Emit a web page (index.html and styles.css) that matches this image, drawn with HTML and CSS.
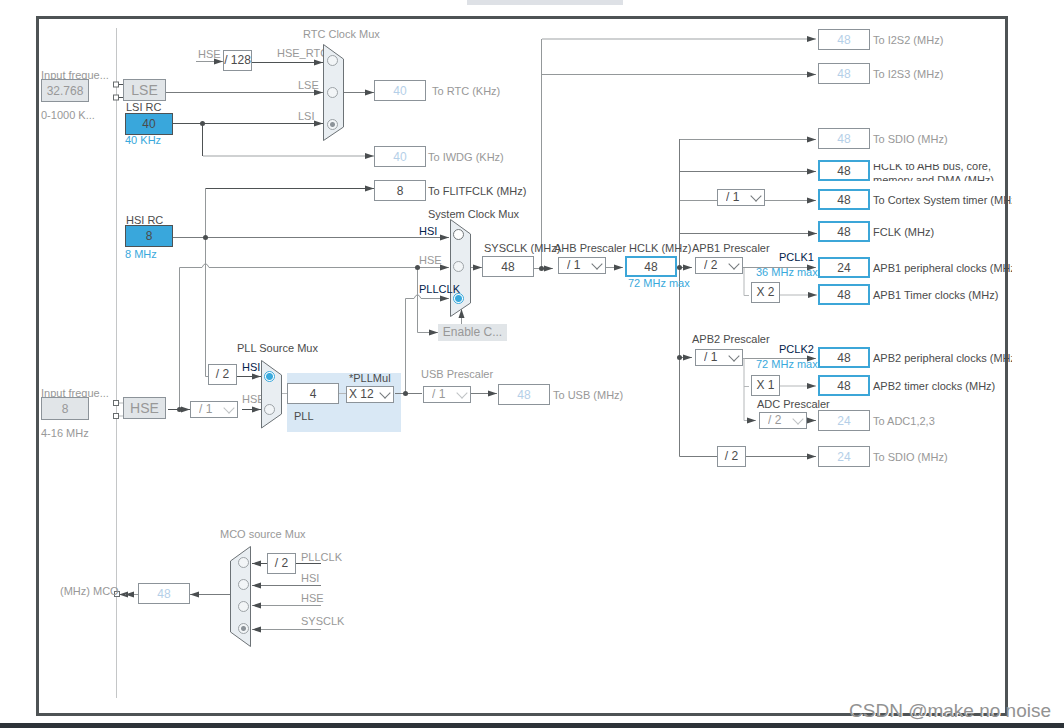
FILE: index.html
```html
<!DOCTYPE html>
<html lang="en">
<head>
<meta charset="utf-8">
<title>Clock Configuration</title>
<link rel="stylesheet" href="styles.css">
</head>
<body>
<div class="page">
  <div class="tab-edge"></div>
  <main class="frame">
    <div class="pll-area"></div>
    <svg class="wires" aria-hidden="true">
      <defs>
        <marker id="arrow" markerUnits="userSpaceOnUse" markerWidth="10" markerHeight="8" refX="9" refY="3.5" orient="auto"><path d="M0 0.5L9 3.5L0 6.5Z" fill="#4a4e50"/></marker>
      </defs>
      <path class="rail" d="M116.500 28V698"/>
      <g class="wire to">
        <path class="mid" d="M196 61.500H223"/>
        <path class="dark" d="M252 62.500H323"/>
        <path d="M166 92.500H323"/>
        <path class="dark" d="M173 123.500H323"/>
        <path d="M343 92.500H374"/>
        <path class="pale" d="M203 156H374"/>
        <path class="dark" d="M205 188.500H374"/>
        <path d="M173 237.500H449"/>
        <path class="mid" d="M179.500 409V267.500H202Q205.500 260 209 267.500H449"/>
        <path class="mid" d="M417.500 267V332.500H438"/>
        <path class="mid" d="M405.500 393V298.500H414Q417.500 291 421 298.500H449"/>
        <path class="mid" d="M470 267.500H482"/>
        <path class="mid" d="M461.500 324V309"/>
        <path class="mid" d="M534 268.500H553"/>
        <path class="pale" d="M542 39H816"/>
        <path class="mid" d="M542 74.500H816"/>
        <path class="mid" d="M606 267.500H623"/>
        <path d="M677 267.500H692"/>
        <path class="mid" d="M680 139.500H816"/>
        <path d="M680 171.500H816"/>
        <path class="mid" d="M765 200.500H816"/>
        <path d="M680 233.500H817"/>
        <path class="mid" d="M743 267.500H816"/>
        <path class="light" d="M780 295H817"/>
        <path d="M680 357.500H692"/>
        <path class="mid" d="M743 358.500H816"/>
        <path class="light" d="M780 386H816"/>
        <path class="light" d="M744 358V420.500H756"/>
        <path d="M807 420.500H816"/>
        <path d="M746 456.500H816"/>
        <path class="dark" d="M168 409.500H190"/>
        <path class="dark" d="M242 409.500H261"/>
        <path class="dark" d="M237 376.500H261"/>
        <path d="M471 393.500H497"/>
        <path class="dark" d="M267 563.500H252"/>
        <path d="M321 585.500H252"/>
        <path class="mid" d="M321 605.500H252"/>
        <path class="mid" d="M321 629.500H252"/>
        <path d="M230 594.500H190"/>
        <path class="mid" d="M138 594.500H119"/>
        <path class="mid" d="M138 594.500H125"/>
      </g>
      <g class="wire">
        <path class="dark" d="M202.500 123V156"/>
        <path class="mid" d="M205.500 188V376.500H208"/>
        <path class="mid" d="M541.500 39V268"/>
        <path d="M679.500 139V456.500H717"/>
        <path class="mid" d="M680 200.500H717"/>
        <path class="light" d="M744 268V295.500H749"/>
        <path class="light" d="M744 386.500H749"/>
        <path class="light" d="M281 393.500H287M339 393.500H346"/>
        <path d="M395 393.500H422"/>
        <path class="dark" d="M296 563.500H321"/>
        <path class="dark" d="M119 84.500H123M119 97.500H123"/>
        <path class="light" d="M119 403H123M119 416H123"/>
      </g>
      <g class="dots">
        <circle cx="202.500" cy="123.500" r="2.500"/><circle cx="205.500" cy="237.500" r="2.500"/>
        <circle cx="417.500" cy="267.500" r="2.500"/><circle cx="541.500" cy="268.500" r="2.500"/>
        <circle cx="679.500" cy="267.500" r="2.500"/><circle cx="679.500" cy="357.500" r="2.500"/>
        <circle cx="179.500" cy="409.500" r="2.500"/><circle cx="405.500" cy="393.500" r="2.500"/>
      </g>
      <g class="pins">
        <rect x="113.500" y="82" width="5" height="5"/><rect x="113.500" y="95" width="5" height="5"/>
        <rect x="113.500" y="400.500" width="5" height="5"/><rect x="113.500" y="413.500" width="5" height="5"/>
        <rect x="114.500" y="591.500" width="5" height="5"/>
      </g>
      <text class="under" x="277" y="57">HSE_RTC</text>
      <text class="under" x="242" y="403">HSE</text>
      <g class="muxes">
        <path d="M323.500 44.500L343.500 59V127L323.500 140.500Z"/>
        <path d="M450.500 219.500L470.500 234V303L450.500 316.500Z"/>
        <path d="M261.500 360.500L281.500 375V414L261.500 428Z"/>
        <path d="M250.500 546.500L230.500 561V632L250.500 646.500Z"/>
      </g>
    </svg>

    <!-- RTC, LSE and LSI -->
    <label class="text gray lse-title" for="lse-in">Input freque...</label>
    <input class="box input-freq lse-in" id="lse-in" value="32.768" disabled>
    <span class="text gray lse-range">0-1000 K...</span>
    <button class="source lse" disabled>LSE</button>
    <label class="text lsi-title" for="lsi">LSI RC</label>
    <input class="box osc lsi" id="lsi" value="40" readonly>
    <span class="text blue lsi-unit">40 KHz</span>
    <span class="text gray rtc-hse">HSE</span>
    <span class="box factor f128">/ 128</span>
    <span class="text gray rtc-title">RTC Clock Mux</span>
    <input class="dial rtc-a" type="radio" name="rtc" aria-label="HSE_RTC" disabled>
    <input class="dial rtc-b" type="radio" name="rtc" id="rtc-b" disabled>
    <input class="dial rtc-c" type="radio" name="rtc" id="rtc-c" disabled checked>
    <label class="text gray rtc-lse" for="rtc-b">LSE</label>
    <label class="text gray rtc-lsi" for="rtc-c">LSI</label>
    <div class="out off rtc-out"><input class="box" id="o-rtc" value="40" disabled><label for="o-rtc">To RTC (KHz)</label></div>
    <div class="out off iwdg"><input class="box" id="o-iwdg" value="40" disabled><label for="o-iwdg">To IWDG (KHz)</label></div>
    <div class="out flitf"><input class="box" id="o-flitf" value="8" readonly><label for="o-flitf">To FLITFCLK (MHz)</label></div>

    <!-- System clock -->
    <label class="text hsi-title" for="hsi">HSI RC</label>
    <input class="box osc hsi" id="hsi" value="8" readonly>
    <span class="text blue hsi-unit">8 MHz</span>
    <span class="text sys-title">System Clock Mux</span>
    <input class="dial on sys-a" type="radio" name="sys" id="sys-a">
    <input class="dial sys-b" type="radio" name="sys" id="sys-b" disabled>
    <input class="dial on sys-c" type="radio" name="sys" id="sys-c" checked>
    <label class="text navy sys-hsi" for="sys-a">HSI</label>
    <label class="text gray sys-hse" for="sys-b">HSE</label>
    <label class="text navy sys-pll" for="sys-c">PLLCLK</label>
    <button class="css-button" disabled>Enable C...</button>
    <label class="text sysclk-title" for="sysclk">SYSCLK (MHz)</label>
    <input class="box sysclk" id="sysclk" value="48" readonly>
    <label class="text ahb-title" for="ahb">AHB Prescaler</label>
    <span class="pick ahb"><select id="ahb"><option>/ 1</option></select></span>
    <label class="text hclk-title" for="hclk">HCLK (MHz)</label>
    <input class="box live hclk" id="hclk" value="48">
    <span class="text blue hclk-max">72 MHz max</span>

    <!-- PLL -->
    <label class="text gray hse-title" for="hse-in">Input freque...</label>
    <input class="box input-freq hse-in" id="hse-in" value="8" disabled>
    <span class="text gray hse-range">4-16 MHz</span>
    <button class="source hse" disabled>HSE</button>
    <span class="pick off hse-div"><select aria-label="HSE divider" disabled><option>/ 1</option></select></span>
    <span class="box factor hsi-half">/ 2</span>
    <span class="text pllsrc-title">PLL Source Mux</span>
    <input class="dial on pll-a" type="radio" name="pll" id="pll-a" checked>
    <input class="dial pll-b" type="radio" name="pll" aria-label="HSE" disabled>
    <label class="text navy pll-hsi" for="pll-a">HSI</label>
    <input class="box pll-in" id="pll-in" value="4" readonly>
    <label class="text pll-title" for="pll-in">PLL</label>
    <label class="text mul-title" for="mul">*PLLMul</label>
    <span class="pick mul"><select id="mul"><option>X 12</option></select></span>
    <label class="text gray usb-title" for="usb">USB Prescaler</label>
    <span class="pick off usb"><select id="usb" disabled><option>/ 1</option></select></span>
    <div class="out off usb-out"><input class="box" id="o-usb" value="48" disabled><label for="o-usb">To USB (MHz)</label></div>

    <!-- Bus prescalers -->
    <span class="pick cortex-div"><select aria-label="Cortex System timer prescaler"><option>/ 1</option></select></span>
    <label class="text apb1-title" for="apb1">APB1 Prescaler</label>
    <span class="pick apb1"><select id="apb1"><option>/ 2</option></select></span>
    <span class="text navy pclk1">PCLK1</span>
    <span class="text blue pclk1-max">36 MHz max</span>
    <span class="box factor apb1-x">X 2</span>
    <label class="text apb2-title" for="apb2">APB2 Prescaler</label>
    <span class="pick apb2"><select id="apb2"><option>/ 1</option></select></span>
    <span class="text navy pclk2">PCLK2</span>
    <span class="text blue pclk2-max">72 MHz max</span>
    <span class="box factor apb2-x">X 1</span>
    <label class="text adc-title" for="adc">ADC Prescaler</label>
    <span class="pick off adc"><select id="adc" disabled><option>/ 2</option></select></span>
    <span class="box factor sdio-half">/ 2</span>

    <!-- Peripheral outputs -->
    <div class="out end off o1"><input class="box" id="o1" value="48" disabled><label for="o1">To I2S2 (MHz)</label></div>
    <div class="out end off o2"><input class="box" id="o2" value="48" disabled><label for="o2">To I2S3 (MHz)</label></div>
    <div class="out end off o3"><input class="box" id="o3" value="48" disabled><label for="o3">To SDIO (MHz)</label></div>
    <div class="out end o4"><input class="box live" id="o4" value="48"><label class="two-line" for="o4"><span>HCLK to AHB bus, core,<br>memory and DMA (MHz)</span></label></div>
    <div class="out end o5"><input class="box live" id="o5" value="48"><label for="o5">To Cortex System timer (MHz)</label></div>
    <div class="out end o6"><input class="box live" id="o6" value="48"><label for="o6">FCLK (MHz)</label></div>
    <div class="out end o7"><input class="box live" id="o7" value="24"><label for="o7">APB1 peripheral clocks (MHz)</label></div>
    <div class="out end o8"><input class="box live" id="o8" value="48"><label for="o8">APB1 Timer clocks (MHz)</label></div>
    <div class="out end o9"><input class="box live" id="o9" value="48"><label for="o9">APB2 peripheral clocks (MHz)</label></div>
    <div class="out end o10"><input class="box live" id="o10" value="48"><label for="o10">APB2 timer clocks (MHz)</label></div>
    <div class="out end off o11"><input class="box" id="o11" value="24" disabled><label for="o11">To ADC1,2,3</label></div>
    <div class="out end off o12"><input class="box" id="o12" value="24" disabled><label for="o12">To SDIO (MHz)</label></div>

    <!-- MCO -->
    <span class="text gray mco-title">MCO source Mux</span>
    <input class="dial mco-a" type="radio" name="mco" id="mco-a" disabled>
    <input class="dial mco-b" type="radio" name="mco" id="mco-b" disabled>
    <input class="dial mco-c" type="radio" name="mco" id="mco-c" disabled>
    <input class="dial mco-d" type="radio" name="mco" id="mco-d" disabled checked>
    <span class="box factor mco-half">/ 2</span>
    <label class="text gray mco-pll" for="mco-a">PLLCLK</label>
    <label class="text gray mco-hsi" for="mco-b">HSI</label>
    <label class="text gray mco-hse" for="mco-c">HSE</label>
    <label class="text gray mco-sys" for="mco-d">SYSCLK</label>
    <label class="text gray mco-unit" for="mco">(MHz) MCO</label>
    <input class="box idle mco" id="mco" value="48" disabled>
  </main>
  <footer class="bottom-bar"></footer>
  <span class="watermark">CSDN @make no noise</span>
</div>
</body>
</html>
```
FILE: styles.css
```css
* { box-sizing: border-box; }
body { margin: 0; background: #fff; font: 11px/12px "Liberation Sans", Arial, sans-serif; color: #4b4b4b; }

/* Page shell: the diagram canvas shares the page's origin */
.page { position: relative; display: flex; flex-direction: column; min-height: 100vh; overflow: hidden; }
.tab-edge { align-self: center; width: 156px; height: 5px; margin-left: 26px; background: #dee1e6; }
.frame { flex: 1; margin: 11px 56px 7px 36px; border: 3px solid #4e5355; }
.bottom-bar { height: 5px; background: #2d3238; }
.watermark { position: absolute; right: 13px; bottom: 6px; font-size: 19px; line-height: 22px; color: #929292; text-shadow: 1px 1px 0 #fff; }
.pll-area { position: absolute; left: 287px; top: 373px; width: 114px; height: 59px; background: #d9e8f5; }

/* Wires */
.wires { position: absolute; left: 0; top: 0; width: 100%; height: 100%; fill: none; }
.wire { stroke: #777b7d; }
.to path { marker-end: url(#arrow); }
.wire .dark { stroke: #4e5254; }
.wire .mid { stroke: #94989a; }
.wire .light { stroke: #b4b7b9; }
.wire .pale { stroke: #cfd1d2; stroke-width: 2; }
.rail { stroke: #c4c6c7; }
.dots { fill: #4a4e50; }
.pins { fill: #fff; stroke: #686c6e; }
.muxes { fill: #e9eef2; stroke: #6c7276; }
.under { fill: #989898; }

/* Diagram parts */
.text, .box, .out, .pick, .dial, .source, .css-button { position: absolute; white-space: nowrap; }
.gray { color: #989898; }
.blue { color: #39a9dc; }
.navy { color: #03234b; }
.box { width: 52px; height: 21px; margin: 0; padding: 0; border: 1px solid #8c9399; border-radius: 0; background: #fff; font: 12px/19px "Liberation Sans", Arial, sans-serif; color: #4b4b4b; text-align: center; }
.factor { width: 29px; }
.live { border: 2px solid #3ca6d8; }
.osc { width: 48px; height: 22px; border-color: #4e5254; background: #39a7dc; }
.input-freq { width: 48px; height: 23px; background: #e1e5e8; color: #989898; }
.off .box, .idle { color: #b5cfe8; }
.out { display: flex; align-items: center; gap: 3px; }
.out .box { position: static; flex: none; }
.end { left: 818px; width: 194px; overflow: hidden; }
.off { color: #989898; }
.two-line { display: flex; align-items: center; height: 17px; margin-top: 4px; line-height: 14px; overflow: hidden; }
.source { width: 43px; height: 22px; padding: 0; border: 1px solid #8c9399; background: #e1e5e8; color: #989898; font: 14px/20px "Liberation Sans", Arial, sans-serif; }
.css-button { left: 438px; top: 324px; width: 69px; height: 17px; padding: 0; border: 0; background: #e1e5e8; color: #989898; font: 12px/17px "Liberation Sans", Arial, sans-serif; }
.pick { width: 48px; height: 17px; }
.pick select { display: block; width: 100%; height: 100%; margin: 0; padding: 0 16px 0 8px; appearance: none; border: 1px solid #8c9399; border-radius: 0; background: #fff; color: #4b4b4b; font: 12px/15px "Liberation Sans", Arial, sans-serif; opacity: 1; }
.pick.off select { color: #989898; }
.pick::after { content: ""; position: absolute; right: 5px; top: 3px; width: 7px; height: 7px; border: solid #74797c; border-width: 0 1px 1px 0; transform: rotate(45deg); pointer-events: none; }
.pick.off::after { border-color: #bfc3c5; }
.pick.mul select { padding-left: 2px; padding-right: 12px; }
.dial { width: 11px; height: 11px; margin: 0; appearance: none; border: 1px solid #9da3a7; border-radius: 50%; background: #f2f5f7; }
.dial.on { border-color: #74797c; background: #fff; }
.dial:checked { background: radial-gradient(circle, #8c9399 0 2px, #f2f5f7 3px); }
.dial.on:checked { border-color: #39a9dc; background: radial-gradient(circle, #39a9dc 0 3px, #fff 4px); }

/* Positions on the canvas */
.lse-title { left: 41px; top: 69px; }
.lse-in { left: 41px; top: 79px; }
.lse-range { left: 41px; top: 109px; }
.lse { left: 123px; top: 79px; }
.lsi-title { left: 126px; top: 101px; }
.lsi { left: 125px; top: 113px; }
.lsi-unit { left: 125px; top: 134px; }
.rtc-hse { left: 198px; top: 48px; }
.f128 { left: 223px; top: 50px; }
.rtc-title { left: 303px; top: 28px; }
.rtc-a { left: 327px; top: 55px; }
.rtc-b { left: 327px; top: 87px; }
.rtc-c { left: 327px; top: 119px; }
.rtc-lse { left: 298px; top: 79px; }
.rtc-lsi { left: 298px; top: 110px; }
.rtc-out { left: 374px; top: 80px; gap: 6px; }
.iwdg { left: 374px; top: 146px; gap: 2px; }
.flitf { left: 374px; top: 180px; gap: 2px; }
.hsi-title { left: 126px; top: 214px; }
.hsi { left: 125px; top: 225px; }
.hsi-unit { left: 125px; top: 248px; }
.sys-title { left: 428px; top: 208px; }
.sys-a { left: 453px; top: 229px; }
.sys-b { left: 453px; top: 261px; }
.sys-c { left: 453px; top: 293px; }
.sys-hsi { left: 419px; top: 225px; }
.sys-hse { left: 419px; top: 254px; }
.sys-pll { left: 419px; top: 283px; }
.sysclk-title { left: 484px; top: 242px; }
.sysclk { left: 482px; top: 256px; }
.ahb-title { left: 554px; top: 242px; }
.ahb { left: 558px; top: 257px; }
.hclk-title { left: 629px; top: 242px; }
.hclk { left: 625px; top: 256px; }
.hclk-max { left: 628px; top: 277px; }
.hse-title { left: 41px; top: 387px; }
.hse-in { left: 41px; top: 397px; }
.hse-range { left: 41px; top: 427px; }
.hse { left: 123px; top: 397px; }
.hse-div { left: 190px; top: 401px; }
.hsi-half { left: 208px; top: 364px; }
.pllsrc-title { left: 237px; top: 342px; }
.pll-a { left: 264px; top: 371px; }
.pll-b { left: 264px; top: 404px; }
.pll-hsi { left: 242px; top: 361px; }
.pll-in { left: 287px; top: 383px; }
.pll-title { left: 294px; top: 410px; }
.mul-title { left: 349px; top: 372px; }
.mul { left: 346px; top: 386px; }
.usb-title { left: 421px; top: 368px; }
.usb { left: 423px; top: 386px; }
.usb-out { left: 498px; top: 384px; }
.cortex-div { left: 717px; top: 189px; }
.apb1-title { left: 692px; top: 242px; }
.apb1 { left: 695px; top: 257px; }
.pclk1 { left: 779px; top: 251px; }
.pclk1-max { left: 756px; top: 266px; }
.apb1-x { left: 751px; top: 282px; }
.apb2-title { left: 692px; top: 333px; }
.apb2 { left: 695px; top: 349px; }
.pclk2 { left: 779px; top: 343px; }
.pclk2-max { left: 756px; top: 358px; }
.apb2-x { left: 751px; top: 375px; }
.adc-title { left: 757px; top: 398px; }
.adc { left: 759px; top: 412px; }
.sdio-half { left: 717px; top: 446px; }
.o1 { top: 29px; }
.o2 { top: 63px; }
.o3 { top: 128px; }
.o4 { top: 160px; }
.o5 { top: 189px; }
.o6 { top: 221px; }
.o7 { top: 257px; }
.o8 { top: 284px; }
.o9 { top: 347px; }
.o10 { top: 375px; }
.o11 { top: 410px; }
.o12 { top: 446px; }
.mco-title { left: 220px; top: 528px; }
.mco-a { left: 238px; top: 557px; }
.mco-b { left: 238px; top: 579px; }
.mco-c { left: 238px; top: 601px; }
.mco-d { left: 238px; top: 623px; }
.mco-half { left: 267px; top: 553px; }
.mco-pll { left: 301px; top: 551px; }
.mco-hsi { left: 301px; top: 572px; }
.mco-hse { left: 301px; top: 592px; }
.mco-sys { left: 301px; top: 615px; }
.mco-unit { left: 60px; top: 585px; }
.mco { left: 138px; top: 583px; }
```
